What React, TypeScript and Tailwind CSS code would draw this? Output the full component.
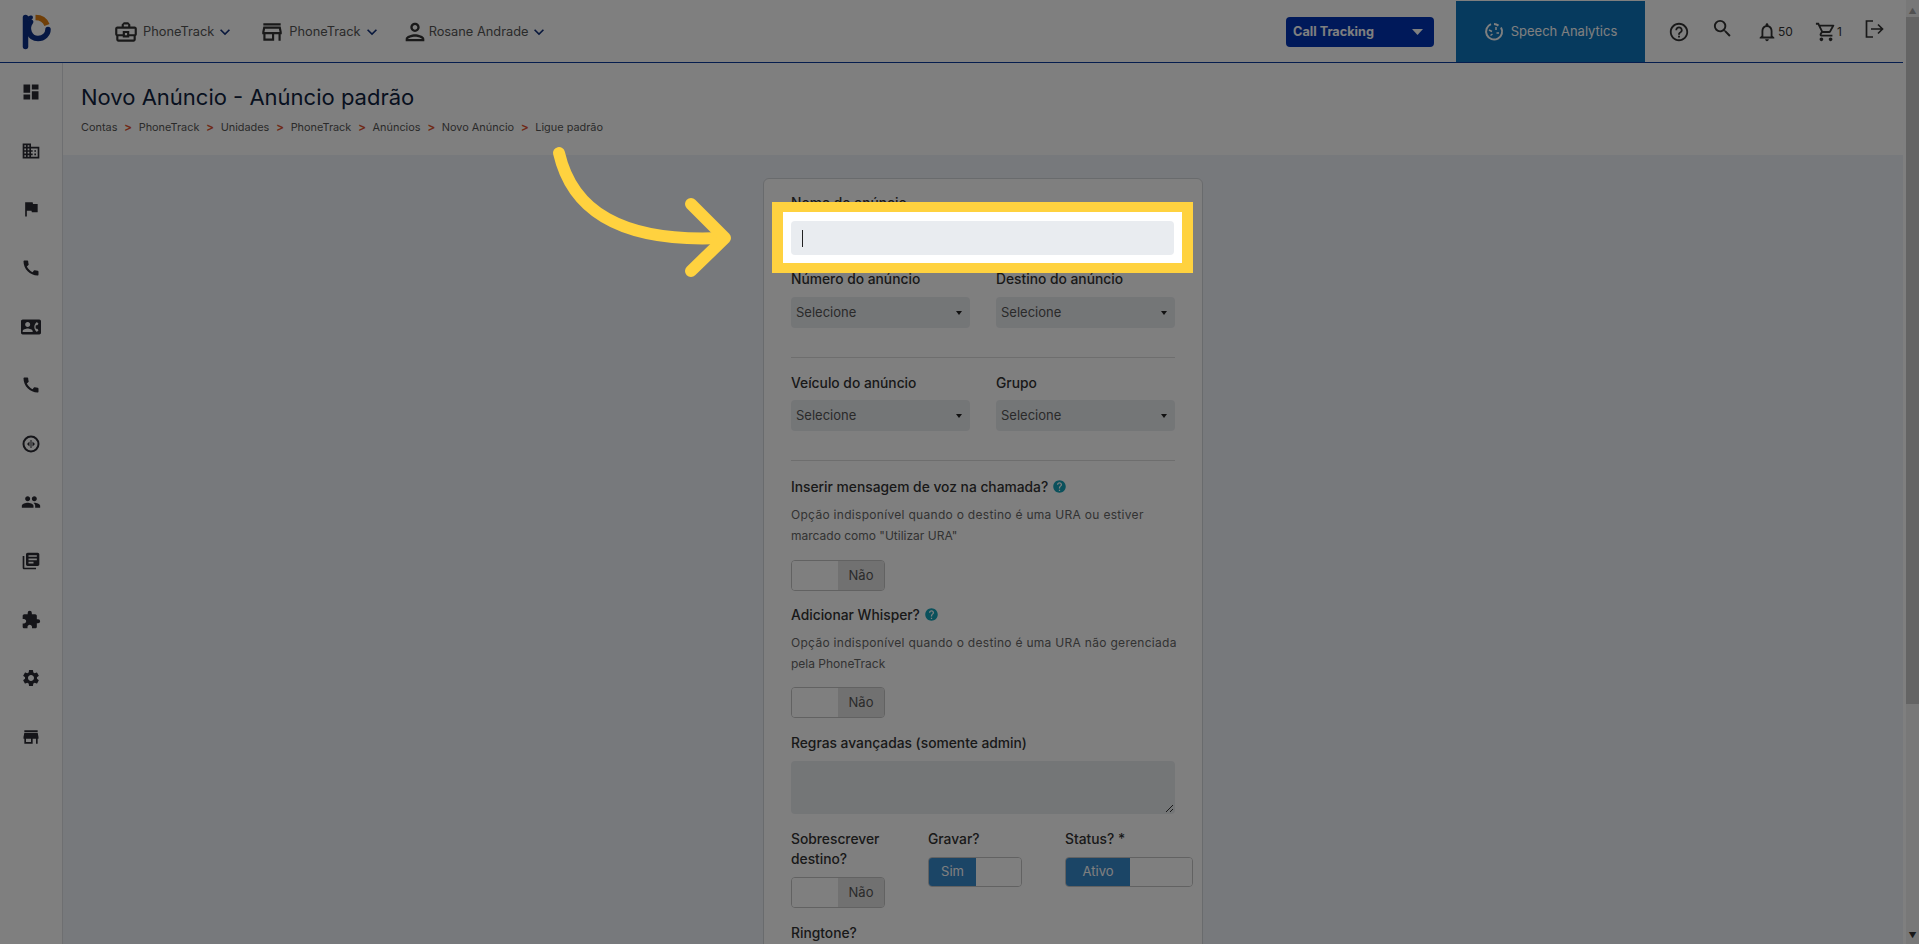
import React from "react";
import {
  MdCall,
  MdContactPhone,
  MdDashboard,
  MdDomain,
  MdExtension,
  MdFlag,
  MdHelp,
  MdHelpOutline,
  MdKeyboardArrowDown,
  MdLibraryBooks,
  MdOutlineBusinessCenter,
  MdOutlineNotifications,
  MdOutlinePerson,
  MdOutlineShoppingCart,
  MdOutlineStore,
  MdPeople,
  MdSearch,
  MdSettings,
  MdStore,
} from "react-icons/md";

const CircleCode = () => (
  <svg width="18" height="18" viewBox="0 0 18 18" fill="none">
    <circle cx="9" cy="9" r="7.5" stroke="#2a2a33" strokeWidth="2" />
    <path d="M9 5v8" stroke="#2a2a33" strokeWidth="1" />
    <path d="M7.5 6.5v5L5 9zM10.5 6.5v5L13 9z" fill="#2a2a33" />
  </svg>
);

const sideIcons = [
  <MdDashboard />,
  <MdDomain />,
  <MdFlag />,
  <MdCall />,
  <MdContactPhone />,
  <MdCall />,
  <CircleCode />,
  <MdPeople />,
  <MdLibraryBooks />,
  <MdExtension />,
  <MdSettings />,
  <MdStore />,
];

const crumbs = ["Contas", "PhoneTrack", "Unidades", "PhoneTrack", "Anúncios", "Novo Anúncio", "Ligue padrão"];

const Logo = () => (
  <svg width="30" height="36" viewBox="0 0 30 36" fill="none" className="ml-[21px]">
    <path d="M4.5 3.5V32.5" stroke="#0b2f86" strokeWidth="5.5" strokeLinecap="round" />
    <path d="M4.5 6C7 4.5 8.5 4 10 3.5" stroke="#0b2f86" strokeWidth="4" strokeLinecap="round" />
    <path d="M9.5 8C5 14 8 24.5 17 24.5C23 24.5 27 20 27 15.5" stroke="#0b2f86" strokeWidth="5.5" strokeLinecap="round" />
    <path d="M14.5 3.5C19.5 3.5 24 6 26 11" stroke="#e07f10" strokeWidth="5.5" />
  </svg>
);

const SpeechIcon = () => (
  <svg width="20" height="20" viewBox="0 0 20 20" fill="none" stroke="white">
    <path d="M7 2.2A8 8 0 1 0 17 5.5" strokeWidth="2" />
    <path d="M10 2A8 8 0 0 1 14.5 3.6" strokeWidth="2" />
    <path d="M5 8l3 1.5M12 5v3M15 11h-2.500M6.500 13.500l2-1.500" strokeWidth="1.500" />
  </svg>
);

const LogoutIcon = () => (
  <svg width="19" height="18" viewBox="0 0 19 18" fill="none" stroke="#333" strokeWidth="1.700">
    <path d="M8 1H1.500V17H8" />
    <path d="M6 9H17.500M13 4.500L17.500 9L13 13.500" />
  </svg>
);

const SelectBox = () => (
  <div className="flex h-[31px] items-center justify-between rounded-[4px] bg-[#e9ecef] pl-[5px] pr-[8px] text-[13px] text-[#555]">
    <span>Selecione</span>
    <svg width="6" height="4" viewBox="0 0 6 4"><path d="M0 0h6L3 4z" fill="#222" /></svg>
  </div>
);

const Label = ({ children }: { children: React.ReactNode }) => (
  <div className="text-[13.8px] leading-[20px] font-medium text-[#333]">{children}</div>
);

const OffToggle = () => (
  <div className="flex h-[31px] w-[94px] overflow-hidden rounded-[4px] border border-[#c4c4c4] text-[13px] text-[#555]">
    <div className="w-[46px] bg-white" />
    <div className="flex flex-1 items-center justify-center bg-[#e2e2e2]">Não</div>
  </div>
);

const OnToggle = ({ label, w, on }: { label: string; w: string; on: string }) => (
  <div className={`flex h-[30px] overflow-hidden rounded-[4px] border border-[#c4c4c4] text-[13px] text-white ${w}`}>
    <div className={`flex items-center justify-center bg-[#378acd] ${on}`}>{label}</div>
    <div className="flex-1 bg-white" />
  </div>
);

const HelpDot = () => <MdHelp className="ml-[4px] inline-block align-[-2px] text-[15px] text-[#17a2b8]" />;

export default function App() {
  return (
    <div className="relative flex h-screen w-full overflow-hidden bg-white font-['Inter','Liberation_Sans',sans-serif]">
      <div className="flex min-w-0 flex-1 flex-col pt-px pr-[3px]">
        {/* topo */}
        <header className="flex h-[62px] shrink-0 items-center border-b border-[#0a3a9c] bg-white">
          <Logo />
          <MdOutlineBusinessCenter className="ml-[62px] text-[26px] text-[#333]" />
          <span className="ml-[4px] text-[12.8px] text-[#555]">PhoneTrack</span>
          <MdKeyboardArrowDown className="ml-px text-[20px] text-[#12307a]" />
          <MdOutlineStore className="ml-[24px] text-[26px] text-[#333]" />
          <span className="ml-[4px] text-[12.8px] text-[#555]">PhoneTrack</span>
          <MdKeyboardArrowDown className="ml-px text-[20px] text-[#12307a]" />
          <MdOutlinePerson className="ml-[19px] text-[28px] text-[#333]" />
          <span className="text-[12.8px] text-[#555]">Rosane Andrade</span>
          <MdKeyboardArrowDown className="ml-px text-[20px] text-[#12307a]" />

          <div className="ml-auto flex h-full items-center">
            <div className="mr-[22px] flex h-[30px] w-[148px] items-center justify-between rounded-[4px] bg-[#0033b5] pl-[7px] pr-[11px] text-[12.7px] font-bold text-white">
              <span>Call Tracking</span>
              <svg width="11" height="6" viewBox="0 0 11 6"><path d="M0 0h11L5.500 6z" fill="#fff" /></svg>
            </div>
            <div className="flex h-full w-[189px] items-center justify-center gap-[7px] bg-[#0d74bd] text-[13px] text-white">
              <SpeechIcon />
              <span>Speech Analytics</span>
            </div>
            <div className="flex h-full w-[258px] items-center text-[#333]">
              <MdHelpOutline className="ml-[23px] text-[22px]" />
              <MdSearch className="mt-[-6px] ml-[21px] text-[23px]" />
              <MdOutlineNotifications className="ml-[22px] text-[22px]" />
              <span className="text-[12px]">50</span>
              <MdOutlineShoppingCart className="ml-[22px] text-[22px]" />
              <span className="text-[12px]">1</span>
              <span className="mt-[-5px] ml-[23px]"><LogoutIcon /></span>
            </div>
          </div>
        </header>

        <div className="flex min-h-0 flex-1">
          {/* menu lateral */}
          <aside className="flex w-[63px] shrink-0 flex-col border-r border-[#dcdfe3] bg-white">
            {sideIcons.map((icon, i) => (
              <div key={i} className="flex h-[58.6px] shrink-0 items-center justify-center text-[20px] text-[#2a2a33]">
                {icon}
              </div>
            ))}
          </aside>

          <main className="min-w-0 flex-1 bg-[#eef2f8]">
            <div className="h-[92px] bg-white pl-[18px] pt-[20px]">
              <h1 className="text-[22px] leading-[28px] font-normal text-[#10233f]">Novo Anúncio - Anúncio padrão</h1>
              <div className="mt-[9px] flex items-center text-[10.9px] leading-[14px] text-[#555]">
                {crumbs.map((c, i) => (
                  <React.Fragment key={i}>
                    {i > 0 && <span className="mx-[6.6px] text-[12px] font-semibold text-[#e0532f]">&gt;</span>}
                    <span>{c}</span>
                  </React.Fragment>
                ))}
              </div>
            </div>

            <div className="ml-[700px] mt-[23px] h-[800px] w-[440px] rounded-t-[6px] border border-[#d3d6da] bg-white px-[27px] pt-[14px]">
              <Label>Nome do anúncio</Label>
              <div className="mt-[8px] h-[34px] rounded-[4px] bg-[#e9ecef]" />

              <div className="mt-[14px] grid grid-cols-[179px_179px] gap-x-[26px]">
                <Label>Número do anúncio</Label>
                <Label>Destino do anúncio</Label>
                <div className="mt-[8px]"><SelectBox /></div>
                <div className="mt-[8px]"><SelectBox /></div>
              </div>

              <div className="mt-[29px] border-t border-[#dcdcdc]" />

              <div className="mt-[15px] grid grid-cols-[179px_179px] gap-x-[26px]">
                <Label>Veículo do anúncio</Label>
                <Label>Grupo</Label>
                <div className="mt-[7px]"><SelectBox /></div>
                <div className="mt-[7px]"><SelectBox /></div>
              </div>

              <div className="mt-[29px] border-t border-[#dcdcdc]" />

              <div className="mt-[16px]">
                <Label>Inserir mensagem de voz na chamada?<HelpDot /></Label>
              </div>
              <p className="mt-[7px] text-[12px] leading-[21px] text-[#666]">
                <span className="tracking-[0.3px]">Opção indisponível quando o destino é uma URA ou estiver</span>
                <br />marcado como "Utilizar URA"
              </p>
              <div className="mt-[14px]"><OffToggle /></div>

              <div className="mt-[14px]">
                <Label>Adicionar Whisper?<HelpDot /></Label>
              </div>
              <p className="mt-[7px] text-[12px] leading-[21px] whitespace-nowrap text-[#666]">
                <span className="tracking-[0.3px]">Opção indisponível quando o destino é uma URA não gerenciada</span>
                <br />pela PhoneTrack
              </p>
              <div className="mt-[13px]"><OffToggle /></div>

              <div className="mt-[15px]">
                <Label>Regras avançadas (somente admin)</Label>
              </div>
              <div className="relative mt-[8px] h-[53px] rounded-[4px] bg-[#e9ecef]">
                <svg width="9" height="9" viewBox="0 0 9 9" className="absolute right-[1px] bottom-[1px]">
                  <path d="M1 8 L8 1 M5 8 L8 5" stroke="#333" strokeWidth="1" />
                </svg>
              </div>

              <div className="mt-[15px] grid grid-cols-[137px_137px_128px]">
                <div>
                  <div className="w-[110px]"><Label>Sobrescrever destino?</Label></div>
                  <div className="mt-[8px]"><OffToggle /></div>
                </div>
                <div>
                  <Label>Gravar?</Label>
                  <div className="mt-[8px]"><OnToggle label="Sim" w="w-[94px]" on="w-[47px]" /></div>
                </div>
                <div>
                  <Label>Status? *</Label>
                  <div className="mt-[8px]"><OnToggle label="Ativo" w="w-[128px]" on="w-[64px]" /></div>
                </div>
              </div>

              <div className="mt-[15px]">
                <Label>Ringtone?</Label>
              </div>
            </div>
          </main>
        </div>
      </div>

      {/* barra de rolagem */}
      <div className="flex w-[13px] shrink-0 flex-col items-center bg-[#f1f1f1]">
        <span className="mt-[5px] h-[12px] text-[8px] leading-[12px] text-[#a3a3a3]">▲</span>
        <div className="h-[687px] w-full bg-[#c9c9c9]" />
        <span className="mt-auto mb-[3px] text-[8px] leading-[12px] text-[#333]">▼</span>
      </div>

      {/* overlay do tour */}
      <div className="absolute inset-0 bg-black/50" />

      <div className="absolute top-[202px] left-[772px] h-[71px] w-[421px] border-x-[11px] border-y-[10px] border-[#ffd23f] bg-white px-[8px] pt-[9px]">
        <div className="relative h-[34px] rounded-[4px] bg-[#e9ecf0]">
          <div className="absolute top-[9px] left-[11px] h-[17px] w-px bg-[#222]" />
        </div>
      </div>

      <svg className="absolute top-0 left-0" width="760" height="300" viewBox="0 0 760 300" fill="none">
        <path d="M559 153 C 572 210, 620 243, 722 238" stroke="#ffd23f" strokeWidth="12" strokeLinecap="round" />
        <path d="M691 204 L725 238 L691 271" stroke="#ffd23f" strokeWidth="12" strokeLinecap="round" strokeLinejoin="round" />
      </svg>
    </div>
  );
}
